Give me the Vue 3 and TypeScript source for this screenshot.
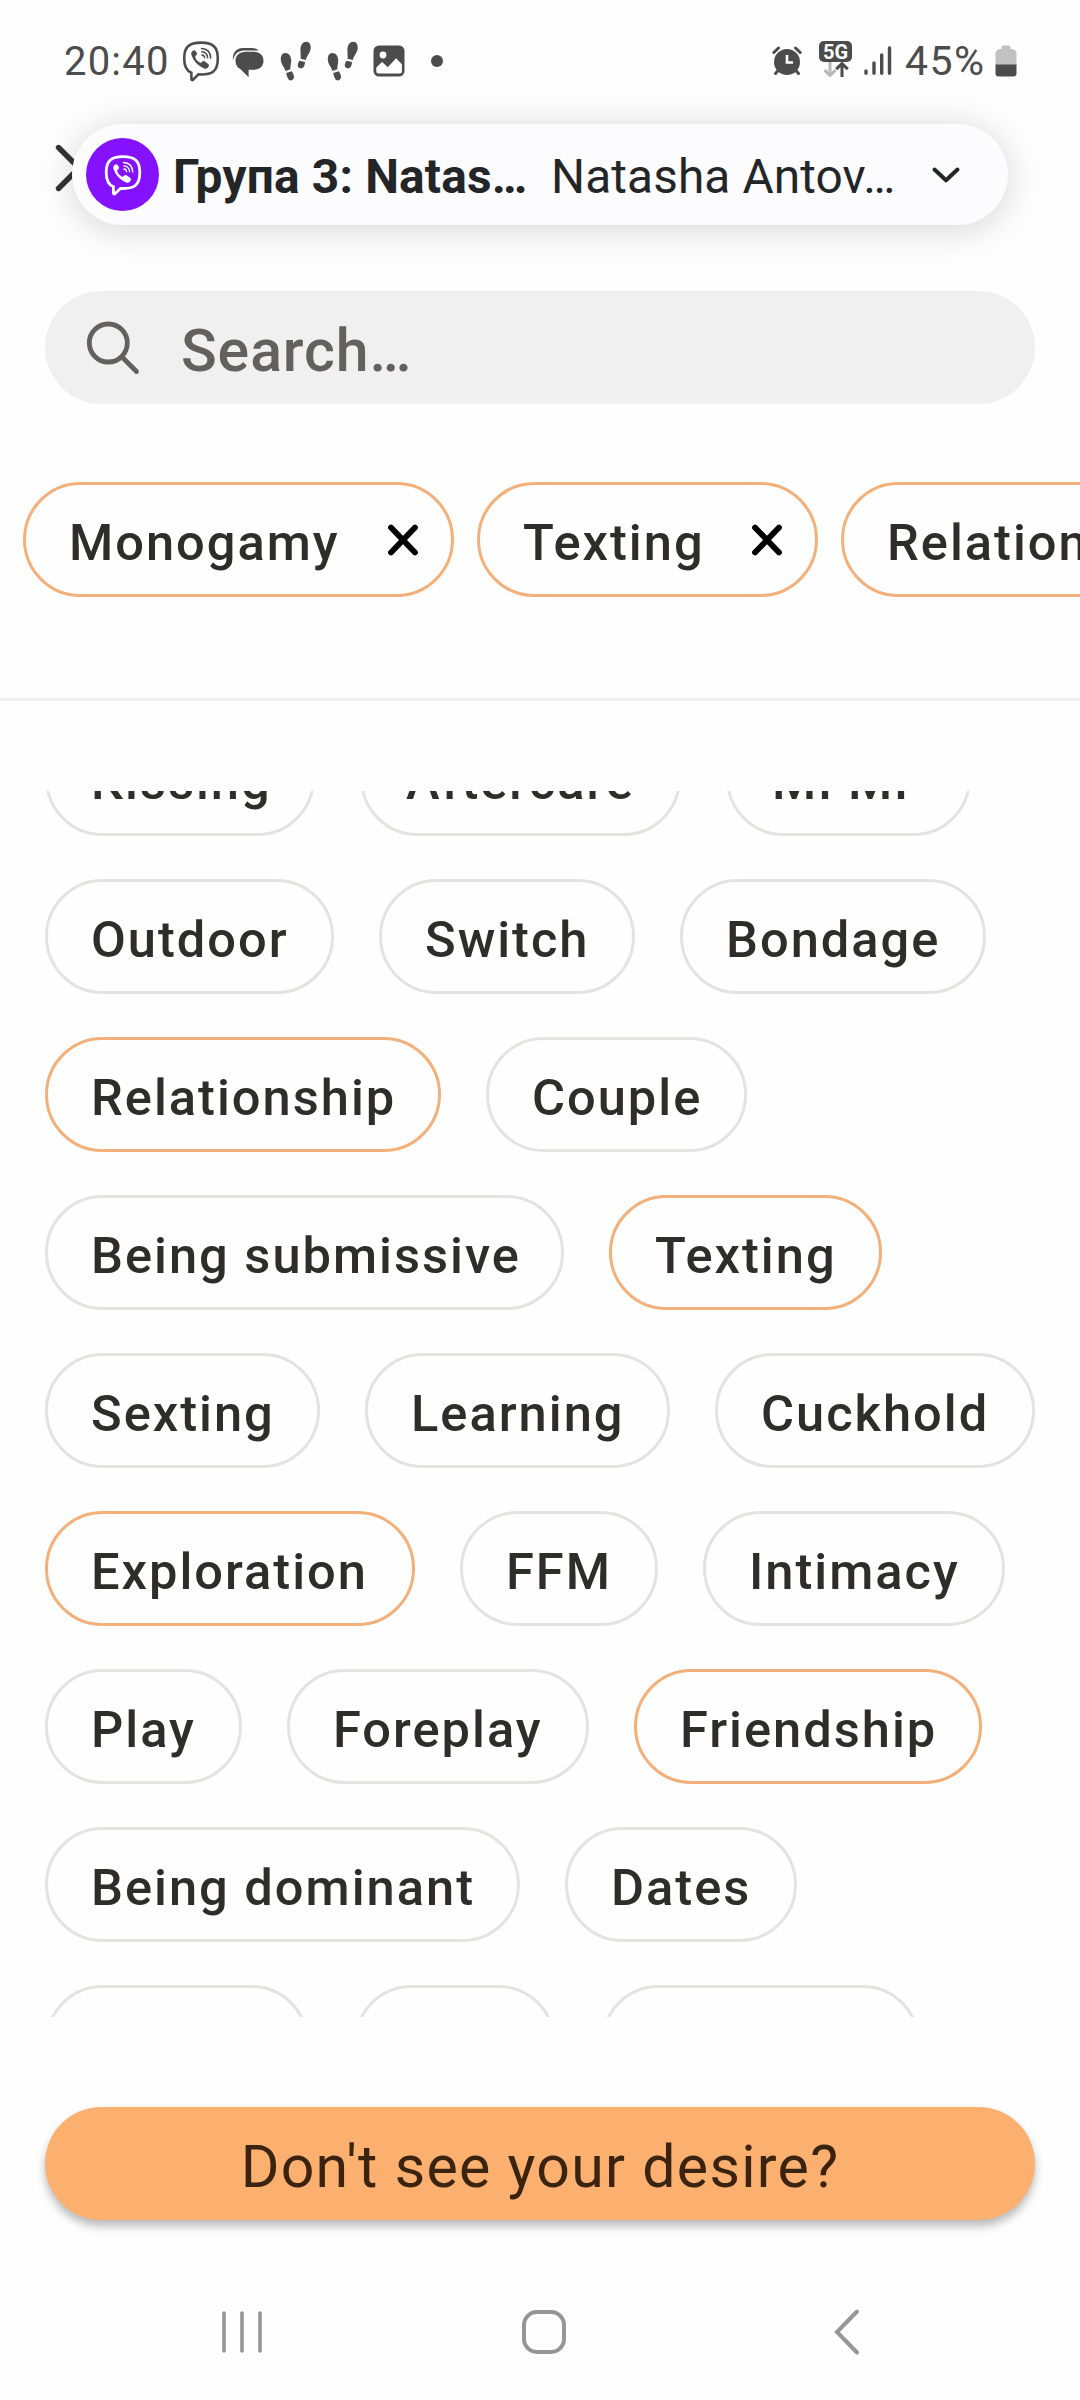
<script setup lang="ts">
interface Chip {
  label: string
  on?: boolean
  width: number
}

const picked: Chip[] = [
  { label: 'Monogamy', width: 431 },
  { label: 'Texting', width: 341 },
  { label: 'Relationship', width: 464 },
]

const rows: Chip[][] = [
  [{ label: 'Kissing', width: 270 }, { label: 'Aftercare', width: 321 }, { label: 'MFMF', width: 245 }],
  [{ label: 'Outdoor', width: 289 }, { label: 'Switch', width: 256 }, { label: 'Bondage', width: 306 }],
  [{ label: 'Relationship', on: true, width: 396 }, { label: 'Couple', width: 261 }],
  [{ label: 'Being submissive', width: 519 }, { label: 'Texting', on: true, width: 273 }],
  [{ label: 'Sexting', width: 275 }, { label: 'Learning', width: 305 }, { label: 'Cuckhold', width: 320 }],
  [{ label: 'Exploration', on: true, width: 370 }, { label: 'FFM', width: 198 }, { label: 'Intimacy', width: 302 }],
  [{ label: 'Play', width: 197 }, { label: 'Foreplay', width: 302 }, { label: 'Friendship', on: true, width: 348 }],
  [{ label: 'Being dominant', width: 475 }, { label: 'Dates', width: 232 }],
  [{ label: '', width: 264 }, { label: '', width: 202 }, { label: '', width: 319 }],
]
</script>

<template>
  <div class="screen">
    <div class="status">
      <span class="clock">20:40</span>
      <svg class="s-viber" width="40" height="42" viewBox="0 0 40 42" fill="none">
        <path d="M20 2.6C8 2.6 3.2 7 3.2 18.5c0 8 2.300 12.300 7.200 14.300v6.200c0 1.300 1 1.500 1.800.600l5.200-5.200c14 .8 19.400-3.200 19.400-15.900C36.800 7 32 2.600 20 2.600z" stroke="#4c4c4c" stroke-width="2.600" />
        <path d="M12.500 10.500c-2 1-2.700 2.500-2 4.600 2.300 6.400 6.300 10.600 12.500 13.300 2 .8 3.400.2 4.500-1.600.9-1.500.5-2.400-.8-3.400l-2.900-2c-1.200-.7-2-.5-2.900.6-.8 1-1.400.9-2.500.2-2-1.300-3.300-2.800-4-4.800-.3-1 0-1.500.8-2.100 1-.8 1.100-1.500.5-2.500l-1.400-2c-.5-.6-1-.7-1.800-.3z" fill="#4c4c4c" />
        <path d="M20.500 8.500c5.500.3 9 3.800 9.200 9.500M20.800 11.800c3.600.3 5.600 2.300 5.800 6M21 15c1.700.200 2.500 1 2.600 2.700" stroke="#4c4c4c" stroke-width="1.500" stroke-linecap="round" />
      </svg>
      <svg class="s-msg" width="32" height="32" viewBox="0 0 32 32">
        <path d="M1 13.500C0 6 4.500 1 10.500 1h9c3 0 5.500.9 7.200 2.500H12.500C6 3.500 2.500 7 1 13.500z" fill="#4c4c4c" />
        <path d="M13.500 4.700h8.500c5.600 0 9.500 3.700 9.500 9s-3.900 9-9.500 9h-5.400v7.500l-8-8C5 20.500 3.500 17.500 3.500 13.700c0-5.300 4.100-9 10-9z" fill="#4c4c4c" />
      </svg>
      <svg v-for="n in 2" :key="n" class="s-feet" width="32" height="40" viewBox="0 0 32 40" fill="#4c4c4c">
        <path d="M5.200 12C8.600 11.800 11 15 11.200 19c.1 3.500-1 5.500-.8 9.300l-5 1.700C4.800 26.500.8 23.500.8 18.300c0-3.600 1.600-6.200 4.400-6.300z" />
        <path d="M6.200 32l5.600-1.800c1 1.900 2.100 3.400 2.200 5.600.1 2-1.200 3.500-3 3.600-3.300.1-4-4.300-4.800-7.400z" />
        <path d="M26.500.8c3 .2 4.500 3 4.200 6.800-.4 4.400-4 7.300-4.900 11.400l-5.200-1.300c.4-3.600-.3-6-.2-9.300C20.600 4 23 .6 26.500.8z" />
        <path d="M19.500 19.800l5.600 1.200c-.4 3-1.100 6.500-4.300 6.300-2.200-.1-3.400-1.900-3-3.900.3-1.300.9-2.400 1.700-3.600z" />
      </svg>
      <svg class="s-img" width="32" height="32" viewBox="0 0 32 32">
        <rect x="0.500" y="0.500" width="31" height="31" rx="5.500" fill="#4c4c4c" />
        <circle cx="10" cy="10" r="3.400" fill="#fff" />
        <path d="M3.300 22.500l5.800-5.600 5.700 5.300 8.300-9 5.800 6v7c0 1.500-.6 2.200-2.200 2.200H5.500c-1.500 0-2.200-.7-2.200-2.200z" fill="#fff" />
      </svg>
      <i class="s-dot"></i>
      <span class="spring"></span>
      <svg class="s-alarm" width="30" height="30" viewBox="0 0 30 30">
        <circle cx="15" cy="16" r="13" fill="#4c4c4c" />
        <path d="M1.800 6.500L6.500 2M28.200 6.500L23.500 2M6.500 24l-3 3.500M23.500 24l3 3.500" stroke="#4c4c4c" stroke-width="3" stroke-linecap="round" />
        <path d="M15 9v7.500h6" stroke="#fff" stroke-width="2.600" fill="none" />
      </svg>
      <div class="s-5g">
        <span>5G</span>
        <svg width="34" height="15" viewBox="0 0 34 15" fill="none" stroke-width="3">
          <path d="M11 0v12.500M5.500 8.200l5.500 5.300 5.500-5.300" stroke="#b9b9b9" />
          <path d="M23 15V2M17.200 7.200L23 1.600l5.800 5.600" stroke="#4c4c4c" />
        </svg>
      </div>
      <svg class="s-sig" width="28" height="30" viewBox="0 0 28 30" stroke="#4c4c4c" stroke-width="3.400" stroke-linecap="round">
        <path d="M2 25v2.300M10 17v10.300M17.700 9v18.300M25.500 2v25.300" />
      </svg>
      <span class="pct">45%</span>
      <svg class="s-bat" width="22" height="32" viewBox="0 0 22 32">
        <path d="M6.500 4V2.500C6.500 1 7.300.5 8.500.5h5c1.200 0 2 .5 2 2V4h1.200C20 4.200 21.500 6 21.500 9v11H.5V9c0-3 1.500-4.800 4.800-5z" fill="#c1c1c1" />
        <path d="M.5 19.500h21v9c0 2-1 3-3 3h-15c-2 0-3-1-3-3z" fill="#4c4c4c" />
      </svg>
    </div>

    <div class="top">
      <svg class="close" width="50" height="50" viewBox="0 0 50 50" stroke="#333" stroke-width="5.400" stroke-linecap="round">
        <path d="M4.500 4.500l41 41M4.500 45.500l41-41" />
      </svg>
      <div class="pill">
        <div class="app">
          <svg width="40" height="42" viewBox="0 0 40 42" fill="none">
            <path d="M20 2.600C8 2.600 3.200 7 3.200 18.500c0 8 2.300 12.300 7.200 14.300v6.200c0 1.300 1 1.500 1.800.6l5.200-5.200c14 .8 19.400-3.200 19.400-15.900C36.800 7 32 2.600 20 2.600z" stroke="#fff" stroke-width="2.800" />
            <path d="M12.500 10.500c-2 1-2.700 2.500-2 4.600 2.300 6.400 6.300 10.600 12.500 13.300 2 .8 3.400.2 4.500-1.600.9-1.500.5-2.400-.8-3.400l-2.900-2c-1.200-.7-2-.5-2.900.6-.8 1-1.400.9-2.500.2-2-1.300-3.300-2.800-4-4.800-.3-1 0-1.500.8-2.100 1-.8 1.100-1.500.5-2.500l-1.400-2c-.5-.6-1-.7-1.800-.3z" fill="#fff" />
            <path d="M20.500 8.500c5.500.3 9 3.800 9.200 9.500M20.800 11.800c3.600.3 5.600 2.300 5.800 6M21 15c1.700.2 2.500 1 2.600 2.700" stroke="#fff" stroke-width="1.300" stroke-linecap="round" />
          </svg>
        </div>
        <b>Група 3: Natas…</b>
        <span class="who">Natasha Antov…</span>
        <svg class="chev" width="30" height="18" viewBox="0 0 30 18" fill="none" stroke="#242527" stroke-width="4" stroke-linecap="round" stroke-linejoin="round">
          <path d="M3.500 3.500L15 14.300 26.500 3.500" />
        </svg>
      </div>
    </div>

    <div class="search">
      <svg width="56" height="56" viewBox="0 0 56 56" fill="none" stroke="#64605c" stroke-width="4.800" stroke-linecap="round">
        <circle cx="23.300" cy="23" r="19" />
        <path d="M37.500 37.500L51.500 51.500" />
      </svg>
      <span>Search…</span>
    </div>

    <div class="picked">
      <div v-for="p in picked" :key="p.label" class="chip on" :style="{ width: p.width + 'px' }">
        <span>{{ p.label }}</span>
        <svg width="36" height="36" viewBox="0 0 36 36" stroke="#000" stroke-width="5.800" stroke-linecap="round">
          <path d="M6 5.500l24 25M6 30.500l24-25" />
        </svg>
      </div>
    </div>

    <div class="list">
      <div v-for="(row, i) in rows" :key="i" class="row">
        <div v-for="(c, j) in row" :key="j" class="chip" :class="{ on: c.on }" :style="{ width: c.width + 'px' }">
          <span>{{ c.label }}</span>
        </div>
      </div>
    </div>

    <button class="cta">Don't see your desire?</button>

    <div class="nav">
      <svg width="44" height="50" viewBox="0 0 44 50" stroke="#969696" stroke-width="3.600" stroke-linecap="round">
        <path d="M4 6v38M22 6v38M40 6v38" />
      </svg>
      <svg width="50" height="50" viewBox="0 0 50 50" fill="none" stroke="#969696" stroke-width="4">
        <rect x="5" y="5" width="40" height="40" rx="13" />
      </svg>
      <svg width="30" height="50" viewBox="0 0 30 50" fill="none" stroke="#969696" stroke-width="4" stroke-linecap="round">
        <path d="M25 4.500L5 25l20 20.500" />
      </svg>
    </div>
  </div>
</template>

<style>
body {
  background: #fefefe;
}
</style>

<style scoped>
.screen {
  width: 1080px;
  height: 2400px;
  overflow: hidden;
  background: #fefefe;
  display: flex;
  flex-direction: column;
  font-family: Roboto, "Liberation Sans", sans-serif;
  color: #2f2d2b;
}
svg {
  display: block;
  flex: none;
}
.status {
  height: 122px;
  flex: none;
  box-sizing: border-box;
  padding: 0 63px 0 64px;
  display: flex;
  align-items: center;
  color: #4c4c4c;
  font-size: 40px;
  white-space: nowrap;
}
.clock {
  width: 104px;
  letter-spacing: 1.2px;
}
.s-viber {
  margin-left: 13px;
}
.s-msg {
  margin: 3px 0 0 11px;
}
.s-feet {
  margin-left: 15px;
}
.s-msg + .s-feet {
  margin-left: 16px;
}
.s-img {
  margin-left: 14px;
}
.s-dot {
  width: 12px;
  height: 12px;
  border-radius: 50%;
  background: #4c4c4c;
  margin-left: 26px;
}
.spring {
  flex: 1;
}
.s-5g {
  width: 33px;
  margin: -4px 12px 0 17px;
}
.s-5g span {
  display: block;
  height: 21px;
  border-radius: 5px;
  background: #4c4c4c;
  color: #fff;
  font-size: 20px;
  line-height: 22px;
  font-weight: 700;
  text-align: center;
}
.pct {
  width: 84px;
  margin-left: 13px;
  font-size: 41px;
  letter-spacing: 1.4px;
}
.s-bat {
  margin-left: 6px;
}
.top {
  position: relative;
  height: 102px;
  flex: none;
  padding: 2px 72px 0;
}
.close {
  position: absolute;
  left: 54px;
  top: 21px;
}
.pill {
  position: relative;
  height: 101px;
  border-radius: 51px;
  background: #fcfbfe;
  box-shadow: 0 4px 36px rgba(0, 0, 0, 0.17);
  display: flex;
  align-items: center;
  box-sizing: border-box;
  padding-left: 14px;
  font-size: 47.800px;
  color: #242527;
  white-space: nowrap;
}
.app {
  width: 73px;
  height: 73px;
  border-radius: 50%;
  background: #8412ff;
  display: flex;
  align-items: center;
  justify-content: center;
}
.pill b {
  width: 353px;
  margin: 4px 0 0 14px;
  letter-spacing: 0.200px;
}
.who {
  width: 344px;
  margin: 4px 0 0 25px;
  letter-spacing: 0.100px;
}
.chev {
  margin-left: 36px;
}
.search {
  flex: none;
  height: 113px;
  margin: 65px 45px 0;
  border-radius: 57px;
  background: #f0f0f0;
  display: flex;
  align-items: center;
  padding-left: 40px;
  font-size: 59px;
  font-weight: 500;
  color: #64605c;
}
.search span {
  margin: 6px 0 0 40px;
  letter-spacing: 0.900px;
}
.picked {
  flex: none;
  height: 216px;
  padding: 78px 0 0 23px;
  border-bottom: 3px solid #f0f0f0;
  display: flex;
  align-items: flex-start;
  gap: 23px;
}
.chip {
  flex: none;
  height: 115px;
  box-sizing: border-box;
  border: 3px solid #e4e3e2;
  border-radius: 58px;
  padding: 0 0 0 43px;
  display: flex;
  align-items: center;
  font-size: 50.600px;
  font-weight: 500;
  letter-spacing: 2px;
  white-space: nowrap;
}
.chip span {
  padding-top: 6px;
}
.chip.on {
  border-color: #f3b07a;
}
.picked .chip {
  padding-right: 30px;
  justify-content: space-between;
}
.list {
  flex: none;
  height: 1226px;
  margin-top: 90px;
  overflow: hidden;
  padding-left: 45px;
}
.row {
  display: flex;
  gap: 45px;
  margin-bottom: 43px;
}
.row:first-child {
  margin-top: -70px;
}
.cta {
  flex: none;
  height: 113px;
  margin: 90px 45px 0;
  border: 0;
  border-radius: 57px;
  background: #fcb070;
  box-shadow: 0 6px 10px rgba(0, 0, 0, 0.28);
  color: #3a2410;
  font: 400 59px Roboto, sans-serif;
  letter-spacing: 1.300px;
  padding: 6px 0 0;
}
.nav {
  flex: 1;
  display: flex;
  align-items: flex-start;
  padding: 87px 0 0 220px;
}
.nav svg + svg {
  margin-left: 255px;
}
.nav svg:last-child {
  margin-left: 263px;
}
</style>
